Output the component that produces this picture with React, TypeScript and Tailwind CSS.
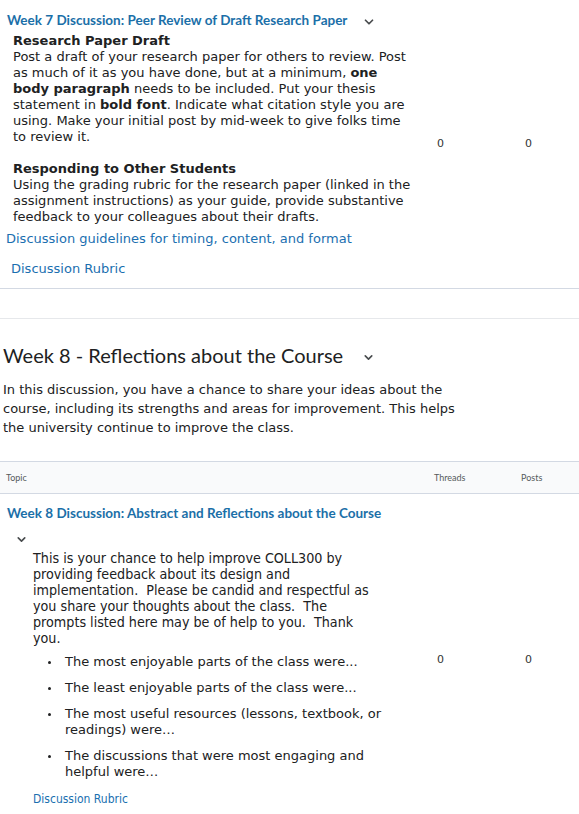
import { ChevronDown } from 'lucide-react';

const verdana = "font-['DejaVu_Sans',sans-serif]";
const tahoma = "font-['DejaVu_Sans_Condensed','DejaVu_Sans',sans-serif]";
const lato = "font-['Lato',sans-serif]";

const prompts = [
  'The most enjoyable parts of the class were...',
  'The least enjoyable parts of the class were...',
  'The most useful resources (lessons, textbook, or readings) were…',
  'The discussions that were most engaging and helpful were…',
];

function Counts({ offset = '' }: { offset?: string }) {
  return (
    <>
      <div className={`${verdana} text-[11px] text-[#333] pl-[3px] ${offset}`}>0</div>
      <div className={`${verdana} text-[11px] text-[#333] pl-[4px] ${offset}`}>0</div>
    </>
  );
}

export default function App() {
  return (
    <div className="w-[579px] bg-white text-[#202122]">
      {/* Week 7 row */}
      <div className="grid grid-cols-[434px_87px_1fr] items-center pt-[10px] pb-[10px] border-b border-[#d3d9e3]">
        <div>
          <div className="flex items-center pl-[7px]">
            <a className={`${lato} font-bold text-[13.5px] text-[#1b6fa8]`}>
              Week 7 Discussion: Peer Review of Draft Research Paper
            </a>
            <ChevronDown className="w-[14px] h-[14px] ml-[15px] mt-[3px] text-[#494c4e]" strokeWidth={3} />
          </div>
          <div className={`${verdana} text-[13px] leading-[16px] pl-[13px] pr-[20px] mt-[3px]`}>
            <p className="font-bold">Research Paper Draft</p>
            <p>
              Post a draft of your research paper for others to review. Post as much of it as you have done, but at a
              minimum, <b>one body paragraph</b> needs to be included. Put your thesis statement in <b>bold font</b>.
              Indicate what citation style you are using. Make your initial post by mid-week to give folks time to
              review it.
            </p>
            <p className="font-bold mt-[16px]">Responding to Other Students</p>
            <p>
              Using the grading rubric for the research paper (linked in the assignment instructions) as your guide,
              provide substantive feedback to your colleagues about their drafts.
            </p>
          </div>
          <a className={`${verdana} block text-[13px] text-[#1a6fb0] pl-[6px] mt-[5px] leading-[18px]`}>
            Discussion guidelines for timing, content, and format
          </a>
          <a className={`${verdana} block text-[13px] text-[#1a6fb0] pl-[11px] mt-[12px] leading-[18px]`}>
            Discussion Rubric
          </a>
        </div>
        <Counts />
      </div>

      <div className="h-[30px] border-b border-[#e6e8eb]" />

      {/* Week 8 header */}
      <div className="px-[3px] pt-[22px]">
        <div className="flex items-center">
          <h2 className={`${lato} text-[20px] text-[#202122] leading-[28px]`}>Week 8 - Reflections about the Course</h2>
          <ChevronDown className="w-[13px] h-[13px] ml-[19px] mt-[4px] text-[#494c4e]" strokeWidth={3} />
        </div>
        <p className={`${verdana} text-[13px] leading-[19px] mt-[11px] pr-[106px]`}>
          In this discussion, you have a chance to share your ideas about the course, including its strengths and areas
          for improvement. This helps the university continue to improve the class.
        </p>
      </div>

      {/* Table header */}
      <div
        className={`${lato} mt-[24px] grid grid-cols-[434px_87px_1fr] items-center h-[33px] bg-[#f9fafb] border-y border-[#d3d9e3] text-[9px] text-[#565a5c]`}
      >
        <div className="pl-[6px]">Topic</div>
        <div>Threads</div>
        <div>Posts</div>
      </div>

      {/* Week 8 row */}
      <div className="grid grid-cols-[434px_87px_1fr] items-center pt-[9px] pb-[24px]">
        <div>
          <a className={`${lato} block font-bold text-[13.5px] text-[#1b6fa8] pl-[7px]`}>
            Week 8 Discussion: Abstract and Reflections about the Course
          </a>
          <ChevronDown className="w-[13px] h-[13px] ml-[15px] mt-[9px] text-[#494c4e]" strokeWidth={3} />
          <div className={`${tahoma} text-[14.2px] leading-[16px] pl-[33px] pr-[54px] mt-[4px] text-[#202122]`}>
            <p>
              This is your chance to help improve COLL300 by providing feedback about its design and
              implementation.&nbsp; Please be candid and respectful as you share your thoughts about the class.&nbsp; The
              prompts listed here may be of help to you.&nbsp; Thank you.
            </p>
            <ul className={`${verdana} text-[13px] mt-[8px] -mr-[30px] flex flex-col gap-[10px]`}>
              {prompts.map((p) => (
                <li key={p} className="flex">
                  <span className="w-[32px] shrink-0 flex justify-center pt-[7px] pl-[1px]">
                    <span className="w-[3px] h-[3px] rounded-full bg-[#202122]" />
                  </span>
                  <span>{p}</span>
                </li>
              ))}
            </ul>
          </div>
          <a className={`${tahoma} block text-[12px] text-[#1a6fb0] pl-[33px] mt-[10px]`}>Discussion Rubric</a>
        </div>
        <Counts offset="pt-[10px]" />
      </div>
    </div>
  );
}
